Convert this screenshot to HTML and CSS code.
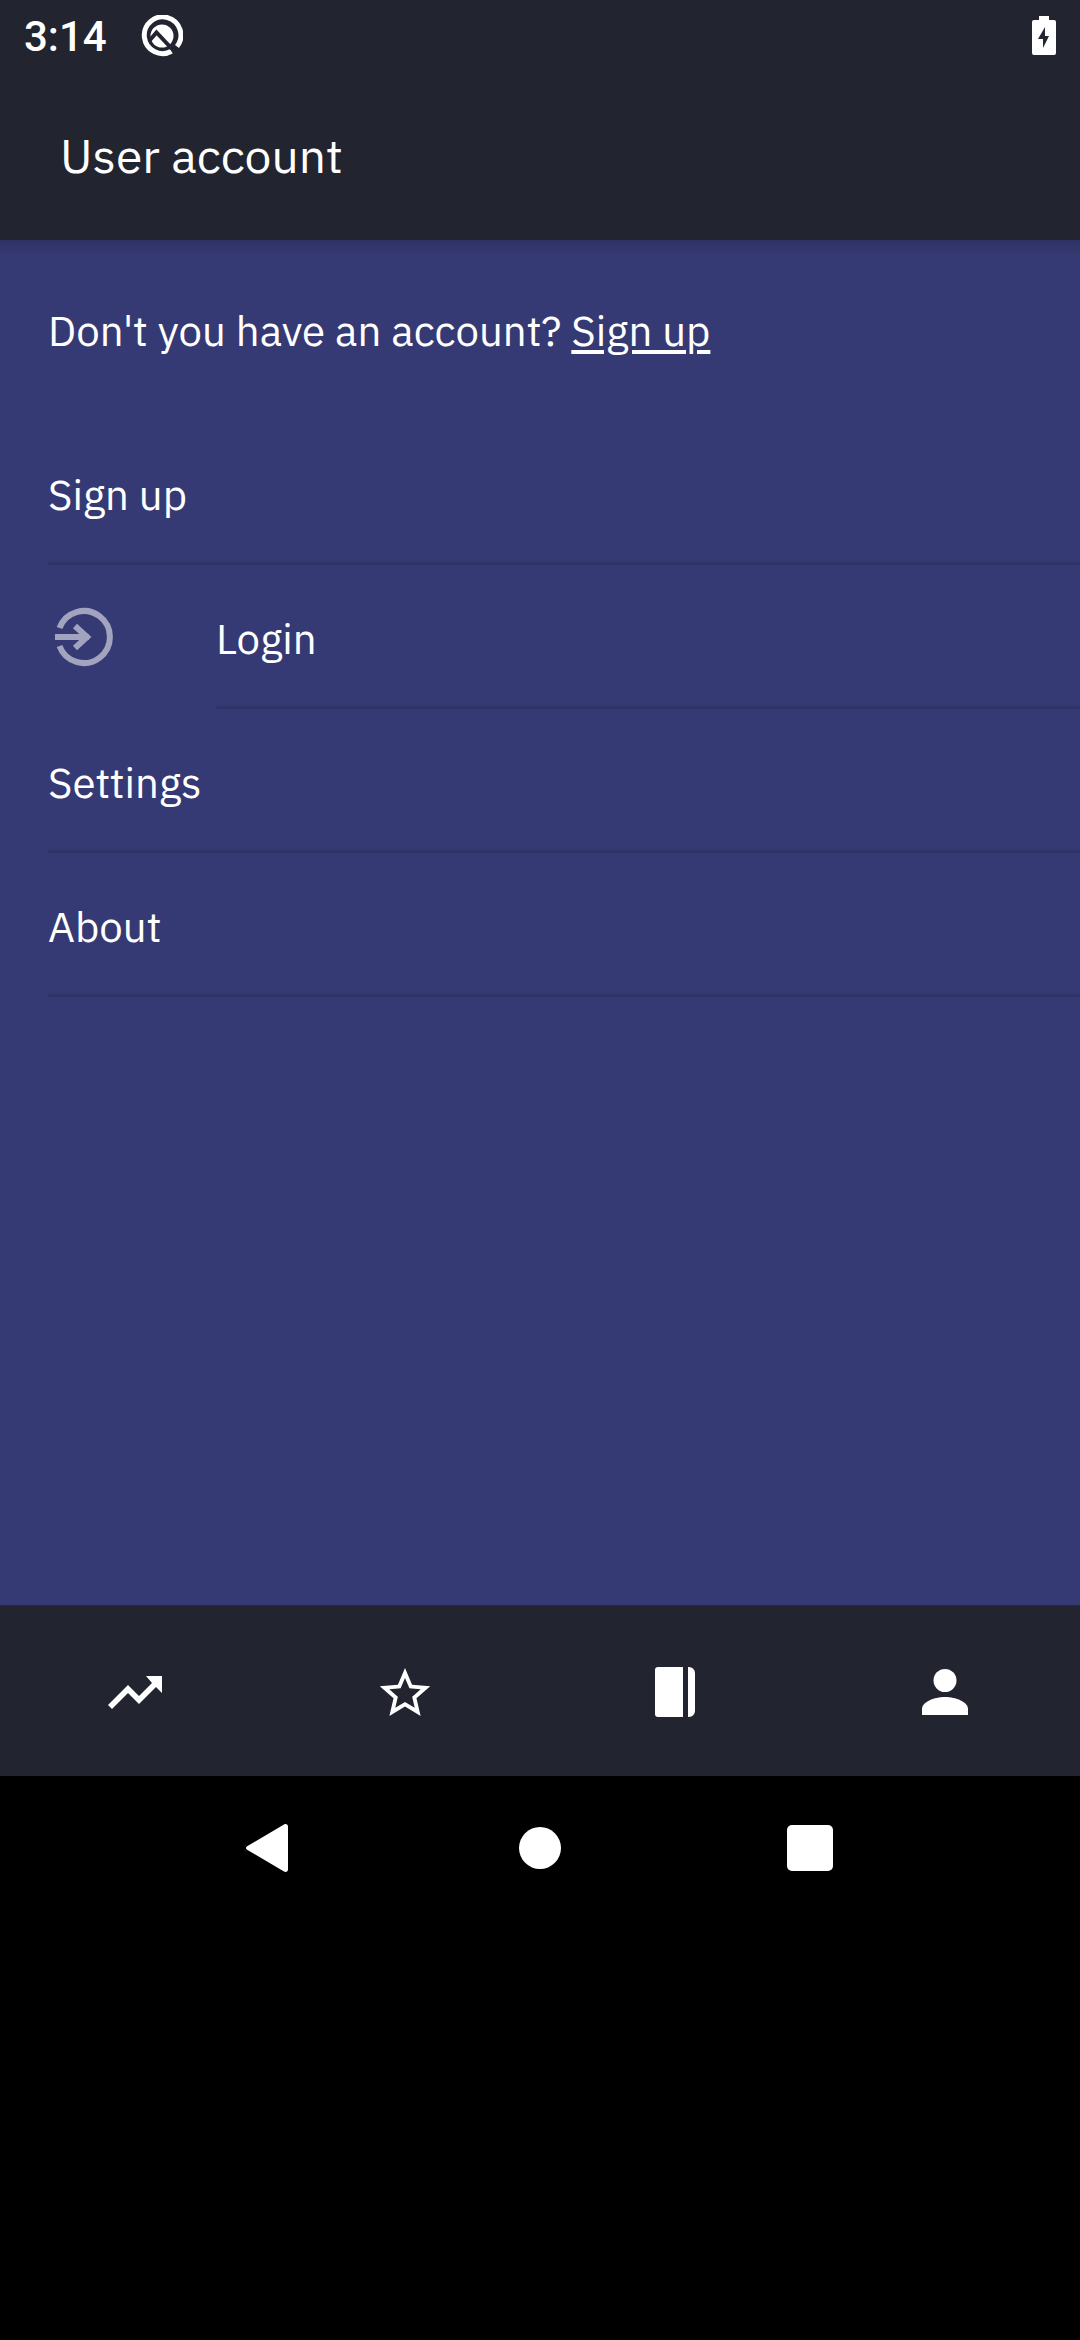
FILE: index.html
```html
<!DOCTYPE html>
<html lang="en">
<head>
<meta charset="utf-8">
<meta name="viewport" content="width=device-width, initial-scale=1">
<title>User account</title>
<link rel="stylesheet" href="styles.css">
</head>
<body>
<div class="status-bar">
  <span class="clock">3:14</span>
  <svg class="status-icon" viewBox="0 0 42 42" aria-hidden="true">
    <path class="ring" d="M30.500 36.200A18.300 18.300 0 1 1 36 31.500"/>
    <circle cx="21" cy="21" r="11.500" fill="currentColor"/>
    <path class="notch" d="M9 25l6.500-7.500L33 36"/>
  </svg>
  <svg class="battery" viewBox="0 0 24 40" aria-hidden="true">
    <path fill="currentColor" fill-rule="evenodd" d="M7 0h10v4h5a2 2 0 0 1 2 2v31a2 2 0 0 1-2 2H2a2 2 0 0 1-2-2V6a2 2 0 0 1 2-2h5zM13 11L6 23h5v9l6-12h-4z"/>
  </svg>
</div>
<header class="toolbar">
  <h1 class="title">User account</h1>
</header>
<main class="content">
  <p class="prompt">Don't you have an account? <a href="#signup">Sign up</a></p>
  <ul class="list">
    <li class="item"><a class="item-inner" href="#signup">Sign up</a></li>
    <li class="item">
      <svg class="item-icon" viewBox="0 0 72 72" aria-hidden="true">
        <path d="M11.500 27A26 26 0 1 1 11.500 45M7 36h34M27 25l12 11L27 47"/>
      </svg>
      <a class="item-inner" href="#login">Login</a>
    </li>
    <li class="item"><a class="item-inner" href="#settings">Settings</a></li>
    <li class="item"><a class="item-inner" href="#about">About</a></li>
  </ul>
</main>
<nav class="tabs" aria-label="Main">
  <a class="tab" href="#trends" aria-label="Trends">
    <svg viewBox="0 0 64 64"><path d="M43 16h16v17l-6-6-17 17-11-11L9 49l-4-4 20-20 11 11 13-13z"/></svg>
  </a>
  <a class="tab" href="#favorites" aria-label="Favorites">
    <svg viewBox="0 0 512 512"><path d="M458 210.400l-145.300-12.500L256 64l-56.700 133.900L54 210.400l110.200 95.500L131.200 448 256 372.700 380.800 448l-33-142.100zM272.500 345.300L256 335.300l-16.500 10-61.100 36.800 16.200-69.500 4.300-18.800-14.500-12.700-53.800-46.600 71-6.100 19.400-1.700 7.500-17.900L256 143.200l27.800 65.500 7.500 17.900 19.400 1.700 71 6.100-53.900 46.700-14.600 12.700 4.400 18.800 16.100 69.500z"/></svg>
  </a>
  <a class="tab" href="#journal" aria-label="Journal">
    <svg viewBox="0 0 64 64"><path d="M15 7h25v50H15a3 3 0 0 1-3-3V10a3 3 0 0 1 3-3zM45 7h1a6 6 0 0 1 6 6v38a6 6 0 0 1-6 6h-1z"/></svg>
  </a>
  <a class="tab" href="#account" aria-label="Account">
    <svg viewBox="0 0 64 64"><circle cx="32" cy="20.500" r="11.500"/><path d="M9 55v-6c0-7 12-12 23-12s23 5 23 12v6z"/></svg>
  </a>
</nav>
<div class="system-nav">
  <button class="system-button" type="button" aria-label="Back"><svg viewBox="0 0 48 48"><path d="M38 0.500c2-1.200 4 0 4 2v43c0 2-2 3.200-4 2L1.500 26c-2-1-2-3 0-4z"/></svg></button>
  <button class="system-button" type="button" aria-label="Home"><svg viewBox="0 0 48 48"><circle cx="24" cy="24" r="21"/></svg></button>
  <button class="system-button" type="button" aria-label="Overview"><svg viewBox="0 0 48 48"><rect x="1" y="1" width="46" height="46" rx="5"/></svg></button>
</div>
</body>
</html>
```

FILE: styles.css
```css
* {
  box-sizing: border-box;
}

body {
  display: flex;
  flex-direction: column;
  min-height: 100vh;
  margin: 0;
  background: #000;
  color: #fff;
  font-family: "IBM Plex Sans", Roboto, sans-serif;
  font-size: 42px;
}

a {
  color: inherit;
}

svg {
  display: block;
}

.status-bar {
  display: flex;
  align-items: center;
  height: 72px;
  padding: 0 24px;
  background: #22242f;
}

.clock {
  font-family: Roboto, sans-serif;
  font-size: 42px;
  font-weight: 500;
}

.status-icon {
  width: 42px;
  height: 42px;
  margin-left: 34px;
}

.ring,
.notch {
  fill: none;
  stroke: currentColor;
  stroke-width: 5;
}

.notch {
  stroke: #22242f;
  stroke-width: 4;
}

.battery {
  width: 24px;
  height: 40px;
  margin-left: auto;
}

.toolbar {
  display: flex;
  align-items: center;
  height: 168px;
  padding: 0 60px 2px;
  background: #22242f;
}

.title {
  margin: 0;
  font-size: 48px;
  font-weight: 400;
}

.content {
  flex: 1;
  background: linear-gradient(#2f3265, #363a74 16px);
}

.prompt {
  margin: 0;
  padding: 60px 48px;
  line-height: 61px;
}

.prompt a {
  text-decoration-thickness: 4px;
  text-underline-offset: 4px;
}

.list {
  margin: 0;
  padding: 0;
  list-style: none;
}

.item {
  display: flex;
  align-items: center;
  padding-left: 48px;
}

.item-icon {
  width: 72px;
  height: 72px;
  margin-right: 96px;
  fill: none;
  stroke: #a2a4bf;
  stroke-width: 6;
}

.item-inner {
  display: flex;
  flex: 1;
  align-items: center;
  height: 144px;
  padding-top: 6px;
  border-bottom: 3px solid #303367;
  text-decoration: none;
}

.tabs {
  display: grid;
  grid-template-columns: repeat(4, 1fr);
  height: 171px;
  padding-top: 2px;
  border-top: 1px solid #292a35;
  background: #22242f;
}

.tab {
  display: grid;
  place-items: center;
}

.tab svg {
  width: 64px;
  height: 64px;
  fill: currentColor;
}

.system-nav {
  display: flex;
  justify-content: center;
  padding-bottom: 420px;
}

.system-button {
  display: grid;
  width: 25%;
  height: 144px;
  padding: 0;
  border: 0;
  background: none;
  color: inherit;
  place-items: center;
}

.system-button svg {
  width: 48px;
  height: 48px;
  fill: currentColor;
}
```
